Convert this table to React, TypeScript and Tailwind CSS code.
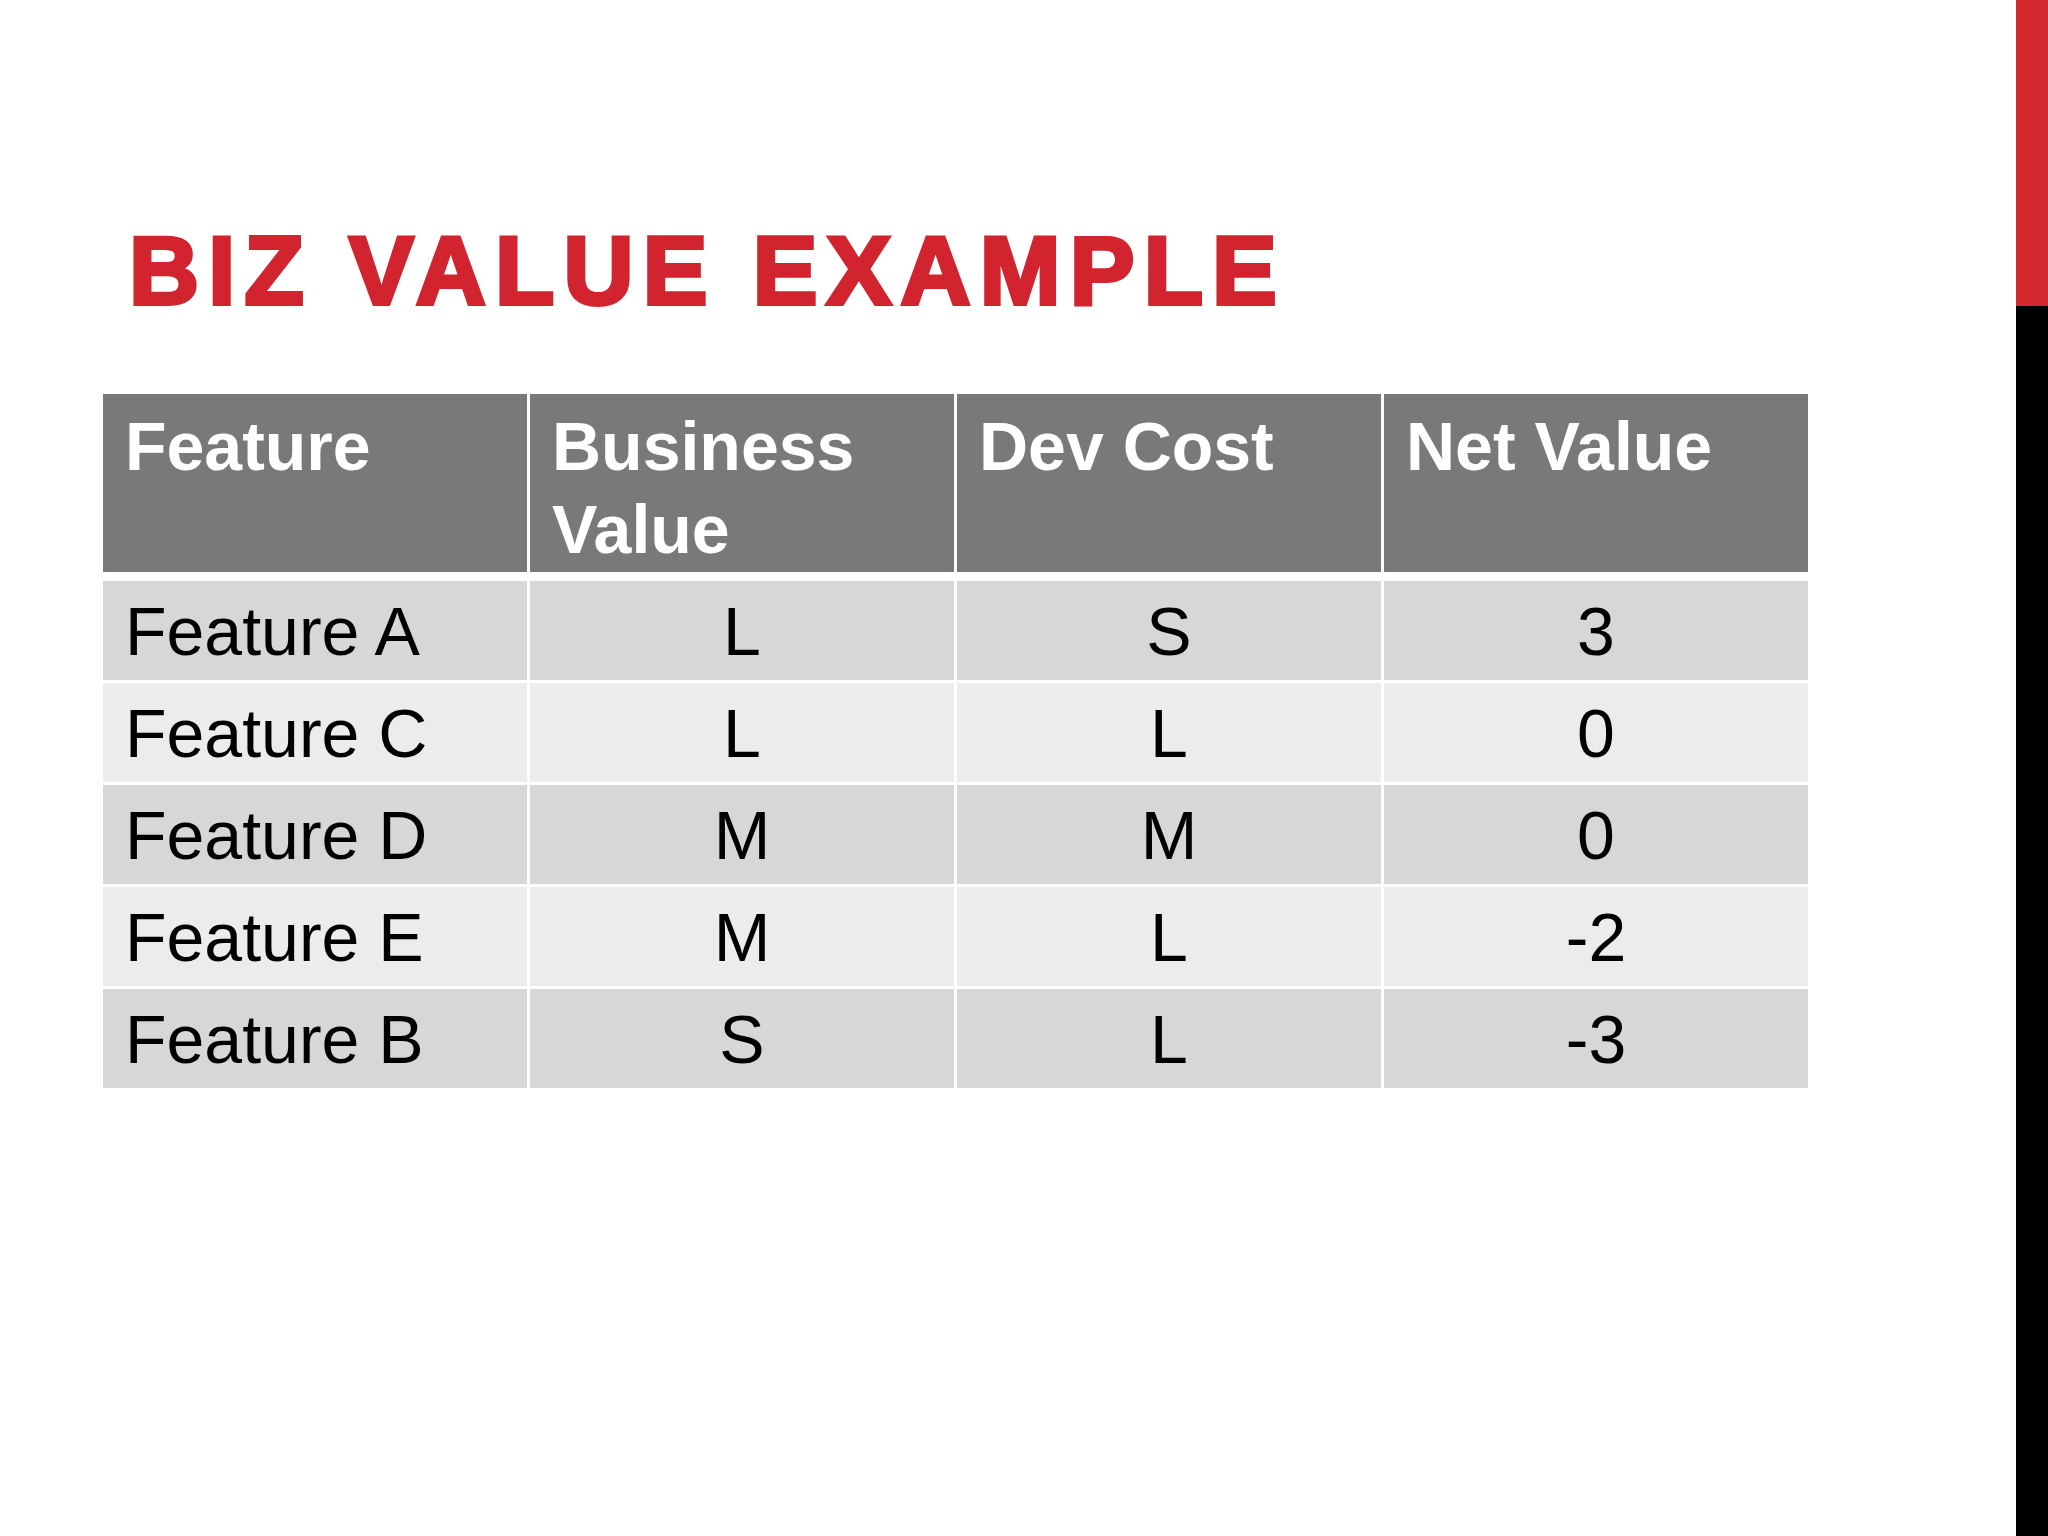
const header = ["Feature", "Business Value", "Dev Cost", "Net Value"];

const rows = [
  { name: "Feature A", biz: "L", cost: "S", net: "3" },
  { name: "Feature C", biz: "L", cost: "L", net: "0" },
  { name: "Feature D", biz: "M", cost: "M", net: "0" },
  { name: "Feature E", biz: "M", cost: "L", net: "-2" },
  { name: "Feature B", biz: "S", cost: "L", net: "-3" },
];

export default function App() {
  return (
    <div className="flex h-[1536px] w-[2048px] overflow-hidden bg-white font-['Liberation_Sans',Arial,sans-serif]">
      <div className="flex flex-1 flex-col pl-[103px] pt-[222px]">
        <h1 className="ml-[26px] text-[97px] font-bold leading-none tracking-[9.2px] text-[#d1242e] [-webkit-text-stroke:4px_#d1242e]">
          BIZ VALUE EXAMPLE
        </h1>

        <div className="mt-[75px] flex w-[1705px] flex-col">
          <div className="grid h-[178px] grid-cols-[repeat(4,424px)] gap-x-[3px]">
            {header.map((h) => (
              <div
                key={h}
                className="bg-[#7a787b] pl-[22px] pr-[20px] pt-[11px] text-[68px] font-bold leading-[83px] text-white"
              >
                {h}
              </div>
            ))}
          </div>

          <div className="mt-[9px] flex flex-col gap-y-[3px]">
            {rows.map((r, i) => {
              const bg = i % 2 === 0 ? "bg-[#d8d6d9]" : "bg-[#ecebed]";
              return (
                <div
                  key={r.name}
                  className="grid h-[99px] grid-cols-[repeat(4,424px)] gap-x-[3px] text-[68px] leading-none text-black"
                >
                  <div className={`${bg} flex items-center pl-[22px]`}>{r.name}</div>
                  <div className={`${bg} flex items-center justify-center`}>{r.biz}</div>
                  <div className={`${bg} flex items-center justify-center`}>{r.cost}</div>
                  <div className={`${bg} flex items-center justify-center`}>{r.net}</div>
                </div>
              );
            })}
          </div>
        </div>
      </div>

      <div className="flex w-[32px] flex-col">
        <div className="h-[306px] bg-[#d2282e]" />
        <div className="flex-1 bg-black" />
      </div>
    </div>
  );
}
